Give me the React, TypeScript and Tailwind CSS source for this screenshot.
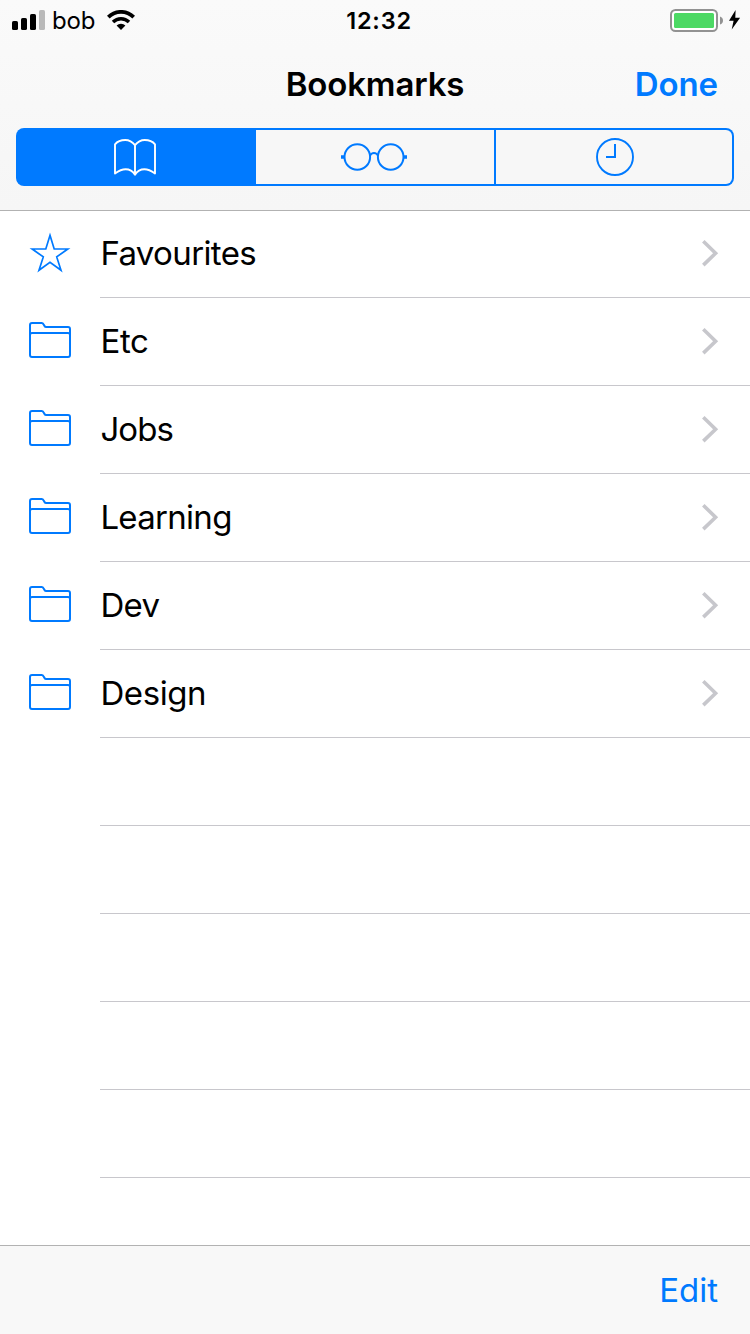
import React from "react";

type Folder = { name: string; icon: "star" | "folder"; tracking: string };

const items: Folder[] = [
  { name: "Favourites", icon: "star", tracking: "tracking-[-0.63px]" },
  { name: "Etc", icon: "folder", tracking: "tracking-[-0.3px]" },
  { name: "Jobs", icon: "folder", tracking: "tracking-[-0.9px]" },
  { name: "Learning", icon: "folder", tracking: "tracking-[-0.7px]" },
  { name: "Dev", icon: "folder", tracking: "tracking-[-0.6px]" },
  { name: "Design", icon: "folder", tracking: "tracking-[-0.4px]" },
];

function SignalIcon() {
  return (
    <svg width="33" height="20" viewBox="0 0 33 20">
      <rect x="0" y="11" width="6" height="9" rx="1.6" />
      <rect x="9" y="8" width="6" height="12" rx="1.6" />
      <rect x="18" y="4" width="6" height="16" rx="1.6" />
      <rect x="27" y="0" width="6" height="20" rx="1.6" fill="#b9b9b9" />
    </svg>
  );
}

function WifiIcon() {
  return (
    <svg width="28" height="20" viewBox="0 0 28 20">
      <path d="M1.3 7.1a18 18 0 0 1 25.4 0" fill="none" stroke="#000" strokeWidth="3.8" />
      <path d="M6 12a11.3 11.3 0 0 1 16 0" fill="none" stroke="#000" strokeWidth="3.4" />
      <path d="M14 20l-4.4-4.5a6.2 6.2 0 0 1 8.8 0z" />
    </svg>
  );
}

function BatteryIcon() {
  return (
    <svg width="72" height="24" viewBox="669 8 72 24">
      <rect x="671" y="10" width="46" height="21" rx="4.5" fill="#fff" stroke="#929292" strokeWidth="2" />
      <rect x="674" y="13" width="40" height="15" rx="1.5" fill="#4cd964" />
      <path d="M720 16.5q3 1 3 4t-3 4z" fill="#929292" />
      <path d="M735.6 10L729 20.8h4.6L731.7 29.5l8.4-11.7h-4.8z" fill="#000" />
    </svg>
  );
}

function BookIcon() {
  return (
    <svg width="44" height="40" viewBox="113 137 44 40" fill="none" stroke="#fff" strokeWidth="1.9" strokeLinejoin="round">
      <path d="M135 145.2C132.4 141.8 129 140 125.2 140c-4 0-7.8 1.4-10.2 4.3v29.2c3.4-2.4 7-4.2 10.6-4.2 4 0 7.1 1.8 9.4 5.4 2.3-3.6 5.4-5.4 9.4-5.4 3.6 0 7.2 1.8 10.6 4.2v-29.2c-2.4-2.9-6.2-4.3-10.2-4.3-3.8 0-7.2 1.8-9.8 5.2zV174.7" />
    </svg>
  );
}

function GlassesIcon() {
  return (
    <svg width="68" height="30" viewBox="340 142 68 30" fill="none" stroke="#007aff" strokeWidth="2">
      <circle cx="357.3" cy="157" r="12.8" />
      <circle cx="390.7" cy="157" r="12.8" />
      <path d="M369.7 156c1-2 2.500-3 4.300-3s3.300 1 4.300 3" />
      <path d="M341 157h4M403 157h4" strokeWidth="3.4" />
    </svg>
  );
}

function ClockIcon() {
  return (
    <svg width="40" height="40" viewBox="595 137 40 40" fill="none" stroke="#007aff" strokeWidth="1.9">
      <circle cx="615" cy="157" r="18" />
      <path d="M615 144v13h-9" strokeWidth="2" />
    </svg>
  );
}

function StarIcon() {
  return (
    <svg width="44" height="44" viewBox="28 231 44 44" fill="none" stroke="#007aff" strokeWidth="1.7" strokeMiterlimit="10">
      <path d="M50 235.3l4.200 13.700h13.600l-11.100 7.900 4.300 13.400L50 262.200l-11 8.100 4.300-13.400-11.100-7.900h13.600z" />
    </svg>
  );
}

function FolderIcon() {
  return (
    <svg width="44" height="38" viewBox="28 321 44 38" fill="none" stroke="#007aff" strokeWidth="2">
      <path d="M30 355v-30q0-2 2-2h9.600q1.300 0 1.900 1.200l1 1.800q.5 1 1.700 1H68q2 0 2 2v26q0 2-2 2H32q-2 0-2-2z" />
      <path d="M30 335q0-2 2-2h36q2 0 2 2" />
    </svg>
  );
}

function Chevron() {
  return (
    <svg width="18" height="28" viewBox="701 239 18 28" fill="none" stroke="#c7c7cc" strokeWidth="3.6">
      <path d="M703.300 241.300L715.600 253.200L703.300 265.100" />
    </svg>
  );
}

export default function App() {
  return (
    <div className="flex h-[1334px] w-[750px] flex-col overflow-hidden bg-white font-['Inter',sans-serif] text-black">
      <header className="flex h-[211px] shrink-0 flex-col border-b border-[#b2b2b2] bg-linear-to-b from-[#fafafa] to-[#f6f6f6]">
        <div className="grid h-10 grid-cols-3 items-center pl-3 pr-[9px]">
          <div className="flex items-center">
            <SignalIcon />
            <span className="ml-[7px] w-[55px] pt-0.5 text-[24px] leading-9 tracking-[-0.2px]">bob</span>
            <WifiIcon />
          </div>
          <time className="pl-[5px] pt-0.5 text-center text-[23.5px] font-semibold leading-9 tracking-[0.8px]">12:32</time>
          <div className="flex justify-end">
            <BatteryIcon />
          </div>
        </div>
        <div className="grid h-[88px] grid-cols-3 items-center px-8 pt-0.5 text-[33px]">
          <h1 className="col-start-2 text-center font-semibold tracking-[-0.15px]">Bookmarks</h1>
          <button className="text-right font-semibold tracking-[-0.1px] text-[#007aff]">Done</button>
        </div>
        <div className="mx-4 flex h-[58px] gap-0.5 rounded-lg bg-[#007aff] p-0.5">
          <button className="flex w-[236px] items-center justify-center pr-0.5" aria-label="Bookmarks">
            <BookIcon />
          </button>
          <button className="flex w-[238px] items-center justify-center bg-[#f7f7f7] pr-0.5" aria-label="Reading List">
            <GlassesIcon />
          </button>
          <button className="flex flex-1 items-center justify-center rounded-r-md bg-[#f7f7f7] pl-0.5" aria-label="History">
            <ClockIcon />
          </button>
        </div>
      </header>

      <main className="flex-1 overflow-hidden">
        <ul className="-mt-px">
          {items.map((item) => (
            <li key={item.name} className="flex h-[88px]">
              <div className={item.icon === "star" ? "flex w-[100px] items-center justify-center pb-0.5" : "flex w-[100px] items-center justify-center pb-1"}>
                {item.icon === "star" ? <StarIcon /> : <FolderIcon />}
              </div>
              <div className="flex flex-1 items-center justify-between border-b border-[#c8c7cc] pb-px pl-[0.4px] pr-[31px]">
                <span className={`text-[33px] leading-10 ${item.tracking}`}>{item.name}</span>
                <Chevron />
              </div>
            </li>
          ))}
          {[0, 1, 2, 3, 4].map((n) => (
            <li key={n} className="ml-[100px] h-[88px] border-b border-[#c8c7cc]" />
          ))}
        </ul>
      </main>

      <footer className="flex h-[89px] shrink-0 items-center justify-end border-t border-[#b2b2b2] bg-[#f8f8f8] px-8 pt-0.5">
        <button className="text-[33px] text-[#007aff]">Edit</button>
      </footer>
    </div>
  );
}
